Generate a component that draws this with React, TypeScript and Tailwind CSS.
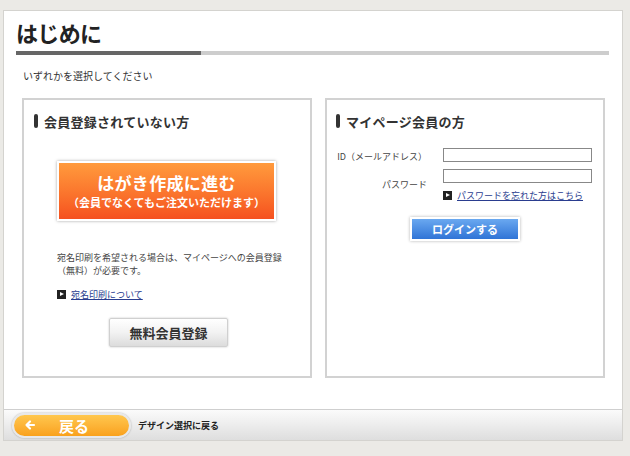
import React from "react";

const font = { fontFamily: '"Noto Sans CJK JP", "Noto Sans", sans-serif' };

const Arrow = () => (
  <span className="inline-block w-[9px] h-[9px] bg-[#222] relative shrink-0">
    <span className="absolute left-[3px] top-[2px] w-0 h-0 border-y-[2.5px] border-y-transparent border-l-[4px] border-l-white" />
  </span>
);

const Heading: React.FC<{ text: string }> = ({ text }) => (
  <div className="flex items-center gap-[6px]">
    <span className="w-[4px] h-[14px] rounded-[2px] bg-[#333]" />
    <span className="text-[13px] font-bold text-[#333] leading-none tracking-[0.02em]">{text}</span>
  </div>
);

export default function App() {
  return (
    <div className="w-[630px] h-[456px] bg-[#ebeae6] pt-[10px] px-[3px]" style={font}>
      <div className="w-[620px] h-[431px] bg-white border border-[#d4d3cf] flex flex-col">
        <div className="flex-1 px-[12px]">
          <h1 className="mt-[10px] text-[22px] font-bold text-[#222] leading-none tracking-[-0.03em]">はじめに</h1>
          <div className="mt-[8px] flex h-[4px] w-[593px]">
            <div className="w-[185px] bg-[#666]" />
            <div className="flex-1 bg-[#cdcdcd]" />
          </div>
          <p className="mt-[16px] ml-[7px] text-[10px] text-[#333] leading-none">いずれかを選択してください</p>

          <div className="mt-[17px] ml-[6px] flex gap-[13px]">
            {/* left */}
            <div className="w-[290px] h-[280px] border-2 border-[#d2d2d2] pt-[14px] pl-[10px] flex flex-col">
              <Heading text="会員登録されていない方" />
              <div className="mt-[33px] ml-[23px] w-[219px] h-[60px] p-[2px] bg-white shadow-[0_0_3px_rgba(0,0,0,0.35)]">
                <div className="w-full h-full bg-gradient-to-b from-[#ff9a3c] to-[#f5501f] flex flex-col items-center justify-center text-white font-bold">
                  <span className="text-[17px] leading-none tracking-[0.02em]">はがき作成に進む</span>
                  <span className="mt-[6px] text-[11px] leading-none">（会員でなくてもご注文いただけます）</span>
                </div>
              </div>
              <p className="mt-[30px] ml-[23px] text-[9px] text-[#444] leading-[13px] w-[230px]">
                宛名印刷を希望される場合は、マイページへの会員登録（無料）が必要です。
              </p>
              <div className="mt-[13px] ml-[23px] flex items-center gap-[5px]">
                <Arrow />
                <span className="text-[9px] text-[#2a3d8f] underline leading-none">宛名印刷について</span>
              </div>
              <div className="mt-[19px] ml-[75px] w-[119px] h-[29px] rounded-[2px] border border-[#d0d0d0] bg-gradient-to-b from-[#ffffff] via-[#f2f2f2] to-[#dcdcdc] shadow-[0_0_2px_rgba(0,0,0,0.25)] flex items-center justify-center">
                <span className="text-[13px] font-bold text-[#333] leading-none">無料会員登録</span>
              </div>
            </div>

            {/* right */}
            <div className="w-[280px] h-[280px] border-2 border-[#d2d2d2] pt-[14px] pl-[9px] flex flex-col">
              <Heading text="マイページ会員の方" />
              <div className="mt-[20px] flex items-center">
                <span className="w-[107px] text-right pr-[16px] pt-[2px] text-[9px] text-[#444] leading-none">ID（メールアドレス）</span>
                <div className="w-[149px] h-[14px] border border-[#888] bg-white" />
              </div>
              <div className="mt-[7px] flex">
                <span className="w-[107px] text-right pr-[16px] pt-[11px] text-[9px] text-[#444] leading-none">パスワード</span>
                <div className="flex flex-col">
                  <div className="w-[149px] h-[14px] border border-[#888] bg-white" />
                  <div className="mt-[8px] flex items-center gap-[5px]">
                    <Arrow />
                    <span className="text-[9px] text-[#2a3d8f] underline leading-none">パスワードを忘れた方はこちら</span>
                  </div>
                </div>
              </div>
              <div className="mt-[17px] ml-[74px] w-[110px] h-[24px] p-[2px] bg-white shadow-[0_0_3px_rgba(0,0,0,0.3)]">
                <div className="w-full h-full bg-gradient-to-b from-[#6aa8f0] to-[#2f74d6] flex items-center justify-center">
                  <span className="text-[11px] font-bold text-white leading-none">ログインする</span>
                </div>
              </div>
            </div>
          </div>
        </div>

        {/* footer */}
        <div className="h-[31px] border-t border-[#cfcfcf] bg-gradient-to-b from-[#fbfbfb] to-[#dedede] flex items-center pl-[8px]">
          <div className="w-[119px] h-[25px] rounded-full border-2 border-[#e8e8e8] bg-gradient-to-b from-[#ffc74d] to-[#f9a11b] shadow-[0_0_2px_rgba(0,0,0,0.3)] flex items-center pl-[10px]">
            <svg width="12" height="12" viewBox="0 0 12 12" fill="none" stroke="white" strokeWidth="2.2" strokeLinecap="round" strokeLinejoin="round">
              <path d="M10 6H2.5M6 2.5L2.5 6L6 9.5" />
            </svg>
            <span className="ml-[23px] text-[15px] font-bold text-white leading-none">戻る</span>
          </div>
          <span className="ml-[7px] text-[9px] font-bold text-[#222] leading-none">デザイン選択に戻る</span>
        </div>
      </div>
    </div>
  );
}
